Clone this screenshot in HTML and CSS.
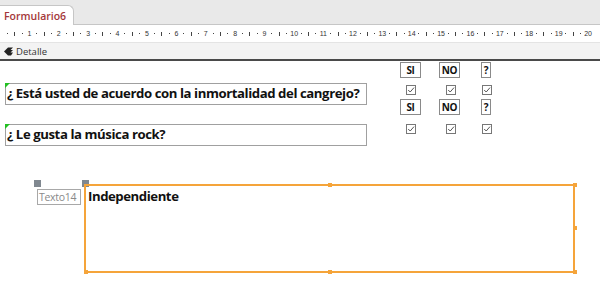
FILE: index.html
```html
<!DOCTYPE html>
<html>
<head>
<meta charset="utf-8">
<link rel="stylesheet" href="styles.css">
</head>
<body>
<div class="app">
  <div class="tabbar">
    <div class="tab">Formulario6</div>
  </div>
  <div class="ruler">
    <div class="cell"><span class="d"></span><span class="t"></span><span class="d"></span><span class="n">1</span></div>
    <div class="cell"><span class="d"></span><span class="t"></span><span class="d"></span><span class="n">2</span></div>
    <div class="cell"><span class="d"></span><span class="t"></span><span class="d"></span><span class="n">3</span></div>
    <div class="cell"><span class="d"></span><span class="t"></span><span class="d"></span><span class="n">4</span></div>
    <div class="cell"><span class="d"></span><span class="t"></span><span class="d"></span><span class="n">5</span></div>
    <div class="cell"><span class="d"></span><span class="t"></span><span class="d"></span><span class="n">6</span></div>
    <div class="cell"><span class="d"></span><span class="t"></span><span class="d"></span><span class="n">7</span></div>
    <div class="cell"><span class="d"></span><span class="t"></span><span class="d"></span><span class="n">8</span></div>
    <div class="cell"><span class="d"></span><span class="t"></span><span class="d"></span><span class="n">9</span></div>
    <div class="cell"><span class="d"></span><span class="t"></span><span class="d"></span><span class="n">10</span></div>
    <div class="cell"><span class="d"></span><span class="t"></span><span class="d"></span><span class="n">11</span></div>
    <div class="cell"><span class="d"></span><span class="t"></span><span class="d"></span><span class="n">12</span></div>
    <div class="cell"><span class="d"></span><span class="t"></span><span class="d"></span><span class="n">13</span></div>
    <div class="cell"><span class="d"></span><span class="t"></span><span class="d"></span><span class="n">14</span></div>
    <div class="cell"><span class="d"></span><span class="t"></span><span class="d"></span><span class="n">15</span></div>
    <div class="cell"><span class="d"></span><span class="t"></span><span class="d"></span><span class="n">16</span></div>
    <div class="cell"><span class="d"></span><span class="t"></span><span class="d"></span><span class="n">17</span></div>
    <div class="cell"><span class="d"></span><span class="t"></span><span class="d"></span><span class="n">18</span></div>
    <div class="cell"><span class="d"></span><span class="t"></span><span class="d"></span><span class="n">19</span></div>
    <div class="cell"><span class="d"></span><span class="t"></span><span class="d"></span><span class="n">20</span></div>
  </div>
  <div class="section">
    <svg class="secicon" width="9" height="9" viewBox="0 0 9 9"><path d="M0 4.5 L4 0.5 L9 0.5 L6.5 3 L9 3 L6.5 5.5 L9 5.5 L7 8.5 L4 8.5 Z" fill="#222"/></svg>
    <span>Detalle</span>
  </div>
  <div class="canvas">
    <div class="ctl q q1"><i class="tri"></i>¿ Está usted de acuerdo con la inmortalidad del cangrejo?</div>
    <div class="ctl q q2"><i class="tri"></i>¿ Le gusta la música rock?</div>

    <div class="ctl lbl si r1">SI</div>
    <div class="ctl lbl no r1">NO</div>
    <div class="ctl lbl qm r1">?</div>
    <div class="ctl lbl si r2">SI</div>
    <div class="ctl lbl no r2">NO</div>
    <div class="ctl lbl qm r2">?</div>

    <svg class="ctl cb c1 k1" viewBox="0 0 10 10"><rect x="0.5" y="0.5" width="9" height="9" fill="#fff" stroke="#777"/><path d="M2.2 5 L4.2 7 L8 2.6" fill="none" stroke="#555" stroke-width="1"/></svg>
    <svg class="ctl cb c2 k1" viewBox="0 0 10 10"><rect x="0.5" y="0.5" width="9" height="9" fill="#fff" stroke="#777"/><path d="M2.2 5 L4.2 7 L8 2.6" fill="none" stroke="#555" stroke-width="1"/></svg>
    <svg class="ctl cb c3 k1" viewBox="0 0 10 10"><rect x="0.5" y="0.5" width="9" height="9" fill="#fff" stroke="#777"/><path d="M2.2 5 L4.2 7 L8 2.6" fill="none" stroke="#555" stroke-width="1"/></svg>
    <svg class="ctl cb c1 k2" viewBox="0 0 10 10"><rect x="0.5" y="0.5" width="9" height="9" fill="#fff" stroke="#777"/><path d="M2.2 5 L4.2 7 L8 2.6" fill="none" stroke="#555" stroke-width="1"/></svg>
    <svg class="ctl cb c2 k2" viewBox="0 0 10 10"><rect x="0.5" y="0.5" width="9" height="9" fill="#fff" stroke="#777"/><path d="M2.2 5 L4.2 7 L8 2.6" fill="none" stroke="#555" stroke-width="1"/></svg>
    <svg class="ctl cb c3 k2" viewBox="0 0 10 10"><rect x="0.5" y="0.5" width="9" height="9" fill="#fff" stroke="#777"/><path d="M2.2 5 L4.2 7 L8 2.6" fill="none" stroke="#555" stroke-width="1"/></svg>

    <div class="ctl texto">Texto14</div>
    <i class="ctl gh gh1"></i>
    <i class="ctl gh gh2"></i>

    <div class="ctl sel">Independiente</div>
    <i class="ctl oh oh1"></i>
    <i class="ctl oh oh2"></i>
    <i class="ctl oh oh3"></i>
    <i class="ctl oh oh4"></i>
    <i class="ctl oh oh5"></i>
    <i class="ctl oh oh6"></i>
  </div>
</div>
</body>
</html>
```

FILE: styles.css
```css
html, body {
  margin: 0;
  padding: 0;
  background: #fff;
}
.app {
  width: 600px;
  height: 300px;
  overflow: hidden;
  font-family: "Open Sans", "Noto Sans", sans-serif;
  display: flex;
  flex-direction: column;
}
.tabbar {
  height: 25px;
  background: #e9e9e9;
  border-bottom: 1px solid #c6c6c6;
  display: flex;
  align-items: flex-end;
  padding-left: 0;
  box-sizing: border-box;
}
.tab {
  height: 20px;
  margin-bottom: -1px;
  padding: 0 7px 0 4px;
  background: #fff;
  border: 1px solid #c6c6c6;
  border-bottom: none;
  border-left: none;
  border-radius: 0 6px 0 0;
  color: #a4373a;
  font-size: 10.5px;
  font-weight: 600;
  line-height: 20px;
  box-sizing: border-box;
}
.ruler {
  height: 18px;
  background: #fff;
  display: flex;
  align-items: center;
  padding-left: 3.7px;
  border-bottom: 1px solid #e4e4e4;
  box-sizing: border-box;
}
.cell {
  flex: 0 0 29.4px;
  display: flex;
  align-items: center;
}
.cell > span {
  flex: 0 0 25%;
  display: flex;
  justify-content: center;
}
.d::before {
  content: "";
  width: 1px;
  height: 1px;
  background: #444;
}
.t::before {
  content: "";
  width: 1px;
  height: 4px;
  background: #444;
}
.n {
  font-size: 7px;
  font-family: "Liberation Sans", sans-serif;
  color: #333;
  line-height: 8px;
}
.section {
  height: 16px;
  background: #f3f3f3;
  border-bottom: 2px solid #4a4a4a;
  display: flex;
  align-items: center;
  gap: 3px;
  padding-left: 4px;
  font-size: 9.5px;
  color: #333;
}
.canvas {
  position: relative;
  flex: 1;
  background: #fff;
}
.ctl {
  position: absolute;
  box-sizing: border-box;
}
.q {
  left: 5px;
  width: 362px;
  height: 22px;
  border: 1px solid #a0a0a0;
  font-weight: 700;
  font-size: 13.2px;
  line-height: 19px;
  padding-left: 1px;
  color: #111;
  letter-spacing: -0.43px;
  white-space: nowrap;
}
.q1 { top: 22px; }
.q2 { top: 63px; }
.tri {
  position: absolute;
  left: -1px;
  top: -1px;
  width: 0;
  height: 0;
  border-top: 5px solid #22c022;
  border-right: 5px solid transparent;
}
.lbl {
  height: 16px;
  border: 1px solid #8a8a8a;
  font-weight: 700;
  font-size: 10px;
  line-height: 14px;
  text-align: center;
  color: #111;
  letter-spacing: -0.3px;
}
.si { left: 400px; width: 21px; }
.no { left: 439px; width: 21px; }
.qm { left: 481px; width: 10px; }
.r1 { top: 1px; }
.r2 { top: 38px; }
.cb {
  width: 10px;
  height: 10px;
}
.c1 { left: 406px; }
.c2 { left: 446px; }
.c3 { left: 482px; }
.k1 { top: 24px; }
.k2 { top: 63px; }
.texto {
  left: 37px;
  top: 128px;
  width: 44px;
  height: 16px;
  border: 1px solid #a8a8a8;
  font-size: 10.5px;
  line-height: 14px;
  color: #8a8a8a;
  padding-left: 1px;
  letter-spacing: -0.3px;
  white-space: nowrap;
}
.gh {
  width: 7px;
  height: 7px;
  background: #808890;
}
.gh1 { left: 34px; top: 119px; }
.gh2 { left: 82px; top: 119px; }
.sel {
  left: 84px;
  top: 123px;
  width: 491px;
  height: 89px;
  border: 2px solid #f5a43a;
  font-weight: 700;
  font-size: 13.2px;
  line-height: 18px;
  padding: 1px 0 0 2px;
  color: #111;
  letter-spacing: -0.45px;
}
.oh {
  width: 4px;
  height: 4px;
  background: #f5a43a;
}
.oh1 { left: 573px; top: 122px; }
.oh2 { left: 573px; top: 165px; }
.oh3 { left: 573px; top: 209px; }
.oh4 { left: 328px; top: 122px; }
.oh5 { left: 328px; top: 209px; }
.oh6 { left: 84px; top: 209px; }
```
